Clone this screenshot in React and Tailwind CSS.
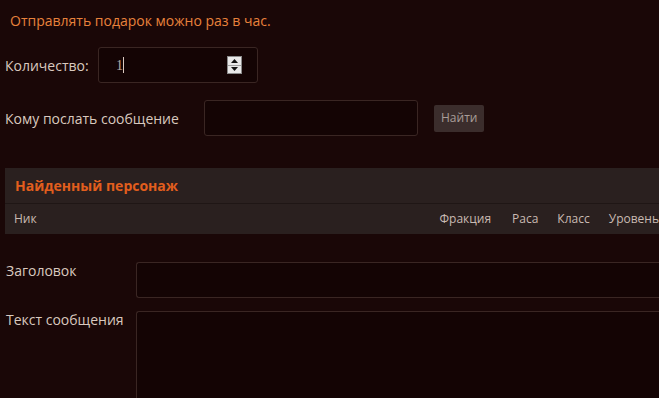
import React from "react";

const font = { fontFamily: '"Open Sans", "Noto Sans", sans-serif' };

export default function App() {
  return (
    <div className="h-[398px] w-[659px] overflow-hidden bg-[#1a0707] text-[#d9c9bf] text-[14px]" style={font}>
      <div className="pl-[10px] pt-[11px] text-[#e8823c] leading-[20px]">
        Отправлять подарок можно раз в час.
      </div>

      <div className="mt-[16px] flex items-center pl-[5px]">
        <label className="w-[93px]">Количество:</label>
        <div className="relative flex h-[36px] w-[160px] items-center rounded-[3px] border border-[#3a2623] bg-[#140404] pl-[17px]">
          <span className="text-[#b9aaa3]" style={{ fontFamily: '"Liberation Serif", serif' }}>1</span>
          <span className="h-[16px] w-px bg-[#d9c9bf]" />
          <div className="ml-auto mr-[15px] flex h-[18px] w-[15px] flex-col border border-[#8a8a8a] bg-[#e8e8e8]">
            <div className="flex flex-1 items-center justify-center border-b border-[#a0a0a0]">
              <svg width="7" height="4" viewBox="0 0 7 4"><path d="M0 4L3.5 0L7 4Z" fill="#111" /></svg>
            </div>
            <div className="flex flex-1 items-center justify-center">
              <svg width="7" height="4" viewBox="0 0 7 4"><path d="M0 0L3.5 4L7 0Z" fill="#111" /></svg>
            </div>
          </div>
        </div>
      </div>

      <div className="mt-[17px] flex items-center pl-[5px]">
        <label className="w-[199px]">Кому послать сообщение</label>
        <div className="h-[36px] w-[214px] rounded-[3px] border border-[#3a2623] bg-[#140404]" />
        <button className="ml-[16px] h-[27px] rounded-[2px] bg-[#3b2d2c] px-[7px] text-[12px] text-[#a99d98]">
          Найти
        </button>
      </div>

      <div className="ml-[5px] mt-[32px] bg-[#2a201f]">
        <div className="flex h-[36px] items-center border-b border-[#1f1615] pl-[10px] font-bold text-[#e25e1d]">
          Найденный персонаж
        </div>
        <div className="flex h-[30px] items-center whitespace-nowrap pl-[9px] text-[12px] text-[#c9bab2]">
          <span>Ник</span>
          <span className="ml-auto">Фракция</span>
          <span className="ml-[21px]">Раса</span>
          <span className="ml-[19px]">Класс</span>
          <span className="ml-[19px]">Уровень</span>
        </div>
      </div>

      <div className="mt-[28px] flex pl-[6px]">
        <label className="w-[130px] leading-[18px]">Заголовок</label>
        <div className="h-[36px] flex-1 rounded-l-[3px] border border-r-0 border-[#3a2623] bg-[#140404]" />
      </div>

      <div className="mt-[13px] flex pl-[6px]">
        <label className="w-[130px] leading-[18px]">Текст сообщения</label>
        <div className="h-[120px] flex-1 rounded-l-[3px] border border-r-0 border-[#3a2623] bg-[#140404]" />
      </div>
    </div>
  );
}
